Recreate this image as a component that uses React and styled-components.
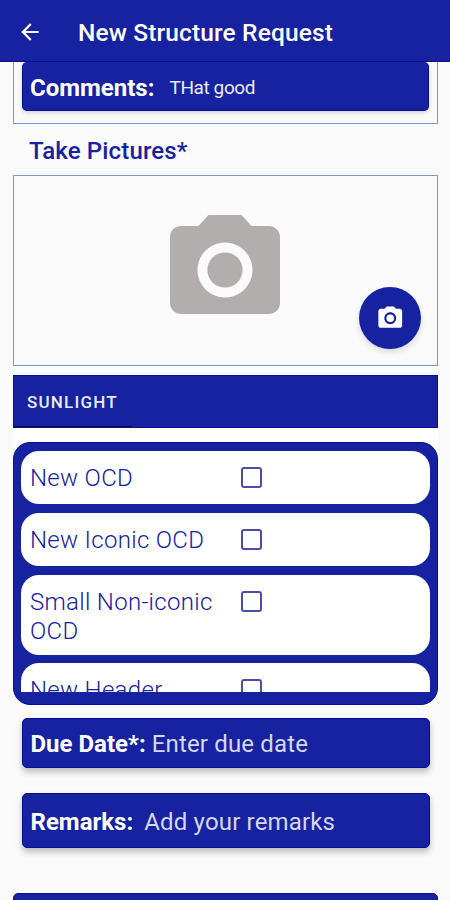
import React, { Component } from 'react'
import styled, { createGlobalStyle } from 'styled-components'

const blue = '#1622a0'
const darkBlue = '#080c92'
const frameBlue = '#8494c6'

const structureTypes = [
    { name: 'New OCD', height: 53 },
    { name: 'New Iconic OCD', height: 53 },
    { name: 'Small Non-iconic OCD', height: 80 },
    { name: 'New Header', height: 53 }
]

const CameraIcon = ({ size, color }) => (
    <Icon width={size} height={size} viewBox='0 0 24 24' fill={color}>
        <circle cx='12' cy='12' r='3.2' />
        <path d='M9 2L7.17 4H4c-1.1 0-2 .9-2 2v12c0 1.1.9 2 2 2h16c1.1 0 2-.9 2-2V6c0-1.1-.9-2-2-2h-3.17L15 2H9zm3 15c-2.76 0-5-2.24-5-5s2.24-5 5-5 5 2.24 5 5-2.24 5-5 5z' />
    </Icon>
)

const BackIcon = () => (
    <Icon width='26' height='26' viewBox='0 0 24 24' fill='#fff'>
        <path d='M20 11H7.83l5.59-5.59L12 4l-8 8 8 8 1.41-1.41L7.83 13H20v-2z' />
    </Icon>
)

class App extends Component {

    state = {
        checked: {}
    }

    toggleType = (name) => {
        const checked = {...this.state.checked}
        checked[name] = !checked[name]
        this.setState({checked})
    }

    render() {
        return (
            <Screen>
                <GlobalStyle />
                <Header>
                    <BackButton aria-label='Back'><BackIcon /></BackButton>
                    <Title>New Structure Request</Title>
                </Header>
                <CommentsCont>
                    <Comments>
                        <Label>Comments:</Label>
                        <CommentText>THat good</CommentText>
                    </Comments>
                </CommentsCont>
                <SectionTitle>Take Pictures*</SectionTitle>
                <PictureCont>
                    <CameraIcon size={132} color='#b3aeae' />
                    <CameraButton aria-label='Take picture'>
                        <CameraIcon size={28.5} color='#fff' />
                    </CameraButton>
                </PictureCont>
                <Tabs>
                    <Tab>SUNLIGHT</Tab>
                </Tabs>
                <ListCont>
                    <ListBox>
                        <List>
                            {structureTypes.map(type => (
                                <Row key={type.name} $height={type.height}>
                                    <RowName>{type.name}</RowName>
                                    <CheckBox
                                        role='checkbox'
                                        aria-label={type.name}
                                        aria-checked={!!this.state.checked[type.name]}
                                        $checked={this.state.checked[type.name]}
                                        onClick={() => this.toggleType(type.name)}
                                    />
                                </Row>
                            ))}
                        </List>
                    </ListBox>
                </ListCont>
                <Field $height={50} $top={13}>
                    <Label>Due Date*:</Label>
                    <Placeholder $gap={6}>Enter due date</Placeholder>
                </Field>
                <Field $height={55} $top={25}>
                    <Label>Remarks:</Label>
                    <Placeholder $gap={11}>Add your remarks</Placeholder>
                </Field>
                <SubmitBar />
            </Screen>
        );
    }
}

export default App

const GlobalStyle = createGlobalStyle`
    * {
        box-sizing: border-box;
    }

    body {
        margin: 0;
        background: #fafafa;
        font-family: Roboto, sans-serif;
    }

    button {
        padding: 0;
        border: none;
        background: none;
    }
`

const Screen = styled.div`
    display: flex;
    flex-direction: column;
    width: 450px;
    height: 900px;
    overflow: hidden;
    background: #fafafa;
`

const Icon = styled.svg`
    display: block;
    flex: none;
`

const Header = styled.div`
    display: flex;
    flex: none;
    align-items: center;
    height: 62px;
    padding: 3px 0 0 17px;
    background: ${blue};
    border-bottom: 1px solid ${darkBlue};
`

const BackButton = styled.button`
    width: 26px;
    height: 26px;
`

const Title = styled.h1`
    margin: 0 0 0 35px;
    padding-top: 1px;
    color: #fff;
    font-size: 24.5px;
    font-weight: 500;
    letter-spacing: 0.13px;
    line-height: 30px;
    white-space: nowrap;
`

const CommentsCont = styled.div`
    flex: none;
    height: 62px;
    margin: 0 12px 0 13px;
    padding: 0 8px;
    border: 1px solid ${frameBlue};
    border-top: none;
`

const Comments = styled.div`
    display: flex;
    align-items: center;
    height: 49px;
    padding: 3px 9px 0 7px;
    border: 1px solid ${darkBlue};
    border-top: none;
    border-radius: 5px;
    background: ${blue};
    box-shadow: 0 2px 4px rgba(0, 0, 0, 0.15);
`

const Label = styled.span`
    flex: none;
    color: #fff;
    font-size: 24px;
    font-weight: 700;
    white-space: nowrap;
`

const CommentText = styled.span`
    margin-left: 15px;
    color: #e9ebfa;
    font-size: 19px;
    letter-spacing: -0.4px;
    white-space: nowrap;
`

const SectionTitle = styled.h2`
    flex: none;
    height: 51px;
    margin: 0;
    padding-left: 29px;
    color: ${blue};
    font-size: 24px;
    font-weight: 500;
    letter-spacing: 0.15px;
    line-height: 54px;
    white-space: nowrap;
`

const PictureCont = styled.div`
    position: relative;
    display: flex;
    flex: none;
    justify-content: center;
    height: 191px;
    margin: 0 12px 0 13px;
    padding: 28px 1px 0 0;
    border: 1px solid ${frameBlue};
`

const CameraButton = styled.button`
    position: absolute;
    right: 16px;
    bottom: 16px;
    display: flex;
    align-items: center;
    justify-content: center;
    width: 62px;
    height: 62px;
    border-radius: 50%;
    background: ${blue};
    box-shadow: 0 3px 6px rgba(0, 0, 0, 0.13);
`

const Tabs = styled.div`
    display: flex;
    flex: none;
    height: 53px;
    margin: 9px 12px 0 13px;
    background: ${blue};
    border: 1px solid ${darkBlue};
`

const Tab = styled.div`
    width: 118px;
    padding-left: 13px;
    border-bottom: 1px solid #0c0b32;
    color: #e9ebfa;
    font-size: 17px;
    font-weight: 500;
    letter-spacing: 1.2px;
    line-height: 52px;
    white-space: nowrap;
`

const ListCont = styled.div`
    flex: none;
    margin: 0 12px 0 13px;
    padding-top: 14px;
    background: linear-gradient(#fff 40px, transparent 40px);
`

const ListBox = styled.div`
    height: 263px;
    padding: 8px 8px 12px;
    border: 1px solid ${darkBlue};
    border-radius: 17px;
    background: ${blue};
`

const List = styled.div`
    display: flex;
    flex-direction: column;
    gap: 9px;
    height: 241px;
    margin: 0 -1px;
    overflow: hidden;
`

const Row = styled.div`
    display: flex;
    flex: none;
    height: ${props => props.$height}px;
    padding: 13px 9px 0;
    border-radius: 18px;
    background: #fff;

    &:last-child {
        margin-top: -1px;
    }
`

const RowName = styled.span`
    width: 211px;
    padding-right: 20px;
    color: ${blue};
    font-size: 24px;
    font-weight: 300;
    letter-spacing: 0.3px;
    line-height: 28.5px;
`

const CheckBox = styled.button`
    width: 21px;
    height: 21px;
    margin-top: 3px;
    border: 2px solid #4d4ca6;
    border-radius: 3px;
    background: ${props => props.$checked ? blue : '#fff'};
`

const Field = styled.div`
    display: flex;
    flex: none;
    align-items: center;
    height: ${props => props.$height}px;
    margin: ${props => props.$top}px 20.5px 0 21.5px;
    padding: 2px 8px 0;
    border: 1px solid ${darkBlue};
    border-radius: 5px;
    background: ${blue};
    box-shadow: 0 4px 6px rgba(0, 0, 0, 0.25);
`

const Placeholder = styled.span`
    margin-left: ${props => props.$gap}px;
    color: #d5d8f3;
    font-size: 24px;
    letter-spacing: 0.17px;
    white-space: nowrap;
`

const SubmitBar = styled.div`
    flex: none;
    height: 50px;
    margin: 45px 12px 0 13px;
    border: 1px solid ${darkBlue};
    border-radius: 5px;
    background: ${blue};
`
